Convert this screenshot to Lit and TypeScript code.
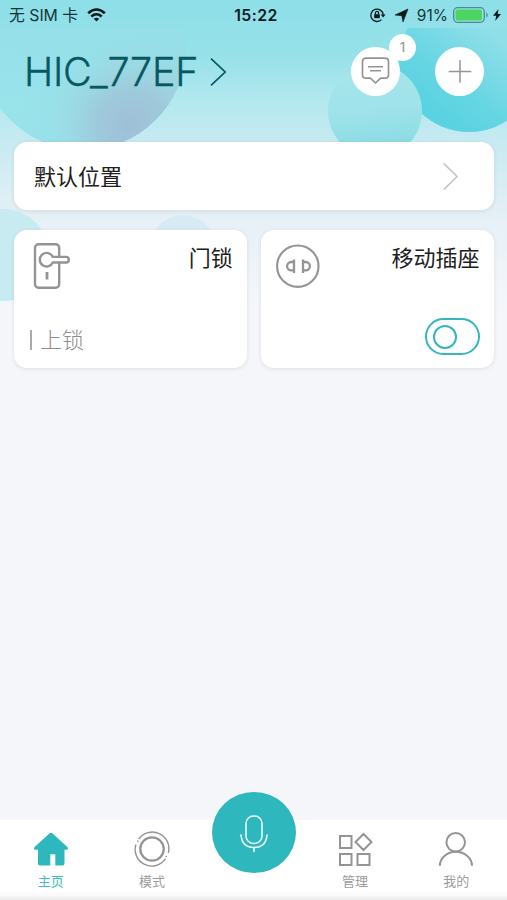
import { LitElement, html, css, svg } from "lit";
import { customElement } from "lit/decorators.js";

@customElement("app-root")
export class AppRoot extends LitElement {
  static styles = css`
    :host {
      display: flex;
      flex-direction: column;
      position: relative;
      width: 507px;
      height: 900px;
      overflow: hidden;
      background: #f4f6fa;
      font-family: Inter, "Noto Sans CJK SC", sans-serif;
      color: #202020;
    }
    * { box-sizing: border-box; }
    svg { display: block; flex: none; overflow: visible; }
    .backdrop { position: absolute; inset: 0; }
    .status, .header, .content, .tabs { position: relative; }
    .status {
      height: 28px;
      padding: 3px 6px 0 9px;
      display: grid;
      grid-template-columns: 1fr auto 1fr;
      align-items: center;
      font-size: 15.8px;
      color: #14373c;
      line-height: 24px;
    }
    .left, .right { display: flex; align-items: center; white-space: nowrap; }
    .left { gap: 9px; }
    .right { justify-content: flex-end; }
    .right svg { margin-top: -1px; }
    .left svg { margin-top: -2px; }
    .time {
      padding-left: 2px;
      font-weight: 600;
      font-size: 15.8px;
      letter-spacing: 0.45px;
      color: #0b1b1f;
    }
    .arrow { margin-left: 9px; }
    .bolt { margin-left: 4px; }
    .pct { margin: 0 5px 0 9px; font-size: 15.5px; }
    .header {
      height: 114px;
      padding: 19px 23px 0 24px;
      display: flex;
      align-items: flex-start;
    }
    .home { display: flex; align-items: center; gap: 12px; height: 50px; flex: 1; }
    .home-name {
      font-size: 39.5px;
      font-weight: 300;
      color: #075860;
      letter-spacing: -0.25px;
      line-height: 50px;
      white-space: nowrap;
      -webkit-text-stroke: 0.35px #075860;
    }
    .actions { display: flex; gap: 35px; }
    .round {
      position: relative;
      width: 49px;
      height: 49px;
      border-radius: 50%;
      background: #fff;
      display: grid;
      place-items: center;
    }
    .badge {
      position: absolute;
      left: 38px;
      top: -13px;
      width: 27px;
      height: 27px;
      border-radius: 50%;
      background: #fff;
      color: #999;
      font-size: 13px;
      font-weight: 500;
      line-height: 27px;
      text-align: center;
    }
    .content { padding: 0 13.5px 0 14px; display: flex; flex-direction: column; gap: 20px; flex: 1; }
    .card {
      background: #fff;
      border-radius: 13px;
      box-shadow: 0 1px 4px rgba(90, 80, 70, 0.13);
    }
    .location {
      height: 68px;
      padding: 0 35.5px 0 20px;
      display: flex;
      align-items: center;
      justify-content: space-between;
      font-size: 22px;
    }
    .location span { margin-top: -2px; }
    .devices { display: grid; grid-template-columns: 1fr 1fr; gap: 14px; }
    .device {
      height: 138px;
      padding: 11px 14px 13px 14px;
      display: flex;
      flex-direction: column;
      justify-content: space-between;
    }
    .top { display: flex; justify-content: space-between; align-items: flex-start; }
    .title { font-size: 22px; line-height: 35px; }
    .state {
      display: flex;
      align-items: center;
      gap: 8px;
      padding-left: 2px;
      font-size: 22px;
      font-weight: 300;
      line-height: 30px;
      color: #8c8c8c;
    }
    .bar { width: 2px; height: 20px; background: #aaa; }
    .toggle {
      align-self: flex-end;
      width: 55px;
      height: 37px;
      border: 2px solid #35b5bc;
      border-radius: 19px;
      padding: 4.5px 6px;
    }
    .knob { width: 24px; height: 24px; border: 2px solid #35b5bc; border-radius: 50%; }
    .tabs {
      height: 80px;
      background: linear-gradient(#fff 0, #fff 70px, #fafafa 75px, #ececec 80px);
      display: grid;
      grid-template-columns: repeat(5, 1fr);
    }
    .tab {
      display: flex;
      flex-direction: column;
      align-items: center;
      padding-top: 11px;
      font-size: 13px;
      line-height: 18px;
      color: #9c9c9c;
      gap: 3px;
    }
    .tab.active { color: #3fbcc2; }
    .mic {
      width: 84px;
      height: 81px;
      margin: -28px 0 0 9.2px;
      border-radius: 50%;
      background: #2fb7be;
      display: grid;
      place-items: center;
    }
  `;

  private backdrop() {
    return svg`<svg class="backdrop" width="507" height="310" viewBox="0 0 507 310">
      <defs>
        <linearGradient id="sky" x1="0" y1="0" x2="0" y2="1">
          <stop offset="0" stop-color="#8edfe8"/>
          <stop offset=".18" stop-color="#97e1e9"/>
          <stop offset=".32" stop-color="#b2e8ef"/>
          <stop offset=".5" stop-color="#cdebf2"/>
          <stop offset=".7" stop-color="#e5f0f6"/>
          <stop offset=".9" stop-color="#f1f5f9"/>
          <stop offset="1" stop-color="#f4f6fa"/>
        </linearGradient>
        <radialGradient id="violet" gradientUnits="userSpaceOnUse" cx="130" cy="125" r="85">
          <stop offset="0" stop-color="#9fbfd7"/>
          <stop offset=".4" stop-color="#9fc5d9" stop-opacity=".8"/>
          <stop offset="1" stop-color="#9fdbe6" stop-opacity="0"/>
        </radialGradient>
        <linearGradient id="big" gradientUnits="userSpaceOnUse" x1="0" y1="60" x2="186" y2="90">
          <stop offset="0" stop-color="#99e4ec"/>
          <stop offset=".5" stop-color="#98dfe8"/>
          <stop offset="1" stop-color="#a0d4e0"/>
        </linearGradient>
        <linearGradient id="bigfade" gradientUnits="userSpaceOnUse" x1="0" y1="28" x2="0" y2="100">
          <stop offset="0" stop-color="#95e0e9"/>
          <stop offset=".35" stop-color="#95e0e9" stop-opacity=".75"/>
          <stop offset="1" stop-color="#95e0e9" stop-opacity="0"/>
        </linearGradient>
        <linearGradient id="mid" x1="0" y1="0" x2="0.1" y2="1">
          <stop offset="0" stop-color="#a6e5ec"/>
          <stop offset=".5" stop-color="#a1e3ea"/>
          <stop offset="1" stop-color="#87dbe4"/>
        </linearGradient>
        <linearGradient id="deep" gradientUnits="userSpaceOnUse" x1="430" y1="110" x2="490" y2="32">
          <stop offset="0" stop-color="#59d2e1"/>
          <stop offset=".4" stop-color="#68d6e3"/>
          <stop offset="1" stop-color="#8edfe8"/>
        </linearGradient>
        <clipPath id="below"><rect y="28" width="507" height="282"/></clipPath>
      </defs>
      <rect width="507" height="310" fill="url(#sky)"/>
      <g clip-path="url(#below)">
        <circle cx="83" cy="47" r="103" fill="url(#big)"/>
        <circle cx="83" cy="47" r="104" fill="url(#bigfade)"/>
        <circle cx="83" cy="47" r="103" fill="url(#violet)"/>
        <circle cx="469" cy="62" r="70" fill="url(#deep)"/>
        <circle cx="375" cy="111" r="47" fill="url(#mid)"/>
        <circle cx="3" cy="255" r="46" fill="#c7ebf1"/>
        <circle cx="183" cy="248" r="33" fill="#d8ebf4"/>
      </g>
    </svg>`;
  }

  render() {
    return html`
      ${this.backdrop()}
      <div class="status">
        <div class="left"><span>无 SIM 卡</span>
          <svg width="19" height="14" viewBox="0 0 19 14" fill="none" stroke="#0a1a1d" stroke-width="2.6">
            <path d="M1.2 5.2Q9.5-2.2 17.8 5.2M4.3 8.4q5.2-4.3 10.4 0"/>
            <path d="M9.5 13.6 6.7 10.8q2.8-2.2 5.6 0z" fill="#0a1a1d" stroke="none"/>
          </svg>
        </div>
        <div class="time">15:22</div>
        <div class="right">
          <svg width="16" height="14" viewBox="0 0 16 14" fill="none" stroke="#0a1a1d" stroke-width="1.3">
            <path d="M11.5 11.6A6.2 6.2 0 1 1 13.2 6.8"/>
            <path d="M10.6 6.4h5L13.1 9.6z" fill="#0a1a1d" stroke="none"/>
            <path d="M4.2 6.2h5.6v4H4.2z" fill="#0a1a1d" stroke="none"/><path d="M5.4 6.5V5a1.6 1.6 0 0 1 3.2 0v1.5"/>
          </svg>
          <svg class="arrow" width="13" height="13" viewBox="0 0 13 13"><path d="M13 0 8 13 6.800 6.700 0 6z" fill="#0a1a1d" stroke="#0a1a1d" stroke-width=".6"/></svg>
          <span class="pct">91%</span>
          <svg width="36" height="16" viewBox="0 0 36 16">
            <rect x=".7" y=".7" width="30.6" height="14.6" rx="4" fill="none" stroke="#50888f" stroke-width="1.3"/>
            <rect x="2.6" y="2.6" width="26.4" height="10.8" rx="1.6" fill="#4cd661"/>
            <path d="M33.3 5.6v4.8q1.5-.8 1.5-2.4t-1.5-2.4z" fill="#50888f"/>
          </svg>
          <svg class="bolt" width="8" height="12" viewBox="0 0 8 12"><path d="M5.5 0 0 6.8h3.2L2.2 12 8 4.9H4.7z" fill="#0a1a1d"/></svg>
        </div>
      </div>
      <div class="header">
        <div class="home">
          <div class="home-name">HIC_77EF</div>
          <svg width="17" height="28" viewBox="0 0 17 28" fill="none" stroke="#075860" stroke-width="1.7"><path d="M1 .7 15.2 14 1 27.3"/></svg>
        </div>
        <div class="actions">
          <div class="round">
            <svg width="28" height="28" viewBox="0 0 28 28" fill="none" stroke="#949494" stroke-width="1.7" stroke-linejoin="round">
              <path d="M4 .2h19Q26.500 .2 26.500 3.700v13q0 3.500-3.500 3.500h-4.300L13.500 25 8.300 20.200H4Q.5 20.200 .5 16.700v-13Q.5 .2 4 .2z"/>
              <path d="M6 8.700h15M8 12.700h11" stroke-width="1.500"/>
            </svg>
            <span class="badge">1</span>
          </div>
          <div class="round">
            <svg width="24" height="24" viewBox="0 0 24 24" stroke="#949494" stroke-width="1.500"><path d="M.7 11.500h22.600M12 .2v22.600"/></svg>
          </div>
        </div>
      </div>
      <div class="content">
        <div class="card location"><span>默认位置</span>
          <svg width="15" height="28" viewBox="0 0 15 28" fill="none" stroke="#c7c7c7" stroke-width="1.700"><path d="M.7 1.300 14 14.500 .7 27.700"/></svg>
        </div>
        <div class="devices">
          <div class="card device">
            <div class="top">
              <svg width="42" height="50" viewBox="0 0 42 50" fill="none" stroke="#949494" stroke-width="2.400" stroke-linejoin="round">
                <rect x="7" y="3.300" width="24.200" height="43.400" rx="3.500"/>
                <path d="M24.800 15.900h13.200a2.800 2.800 0 0 1 0 5.600H24.800a6.800 6.800 0 1 1 0-5.600z" fill="#fff"/>
                <path d="M19 31v7.500" stroke-width="2.800"/>
              </svg>
              <div class="title">门锁</div>
            </div>
            <div class="state"><span class="bar"></span><span>上锁</span></div>
          </div>
          <div class="card device">
            <div class="top">
              <svg width="46" height="50" viewBox="0 0 46 50" fill="none" stroke="#949494" stroke-width="2.100">
                <circle cx="22.800" cy="25.200" r="20.700"/>
                <path d="M19 18.500v13.600M19 21h-2.700a4.200 4.200 0 0 0 0 8.400H19M28 18.500v13.600M28 21h2.700a4.200 4.200 0 0 1 0 8.400H28" stroke-width="2.300"/>
              </svg>
              <div class="title">移动插座</div>
            </div>
            <div class="toggle"><div class="knob"></div></div>
          </div>
        </div>
      </div>
      <div class="tabs">
        <div class="tab active">
          <svg width="36" height="38" viewBox="0 0 36 38"><path d="M16.700 2.200q1.300-1 2.600 0L34.400 16q1.700 2-.8 2.800H31.500v13.700q0 2-2 2h-7.200v-11.300h-5v11.300H7q-2 0-2-2V18.800H2.300Q0 18 1.600 16z" fill="#2fb7be"/></svg>
          <span>主页</span>
        </div>
        <div class="tab">
          <svg width="36" height="38" viewBox="0 0 36 38" fill="none" stroke="#949494">
            <circle cx="18" cy="18" r="11.700" stroke-width="2.300"/>
            <path d="M4.600 8.200A16.600 16.600 0 0 1 34.300 22M31.600 27.600A16.600 16.600 0 0 1 1.900 13.500" stroke-width="1.400"/>
            <path d="M3.500 10.800l.6-1M32 26l.5-1" stroke-width="1.700"/>
          </svg>
          <span>模式</span>
        </div>
        <div class="mic">
          <svg width="28" height="38" viewBox="0 0 28 38" fill="none" stroke="#e8fbfb" stroke-width="1.600" stroke-linecap="round">
            <rect x="6" y="2" width="16" height="27.500" rx="7.500"/><path d="M1 21q1 12.500 13 12.500T27 21M14 33.500V37.500"/>
          </svg>
        </div>
        <div class="tab">
          <svg width="36" height="38" viewBox="0 0 36 38" fill="none" stroke="#949494" stroke-width="2">
            <path d="M3 5h11.500v12H3zM3 23h11.500v11H3zM20.500 23h12v11h-12zM26.500 3l8 8-8 8-8-8z"/>
          </svg>
          <span>管理</span>
        </div>
        <div class="tab">
          <svg width="36" height="38" viewBox="0 0 36 38" fill="none" stroke="#949494" stroke-width="2">
            <circle cx="17.700" cy="11.300" r="9.300"/><path d="M1.800 34.800a16.100 14 0 0 1 32.200 0"/>
          </svg>
          <span>我的</span>
        </div>
      </div>`;
  }
}
